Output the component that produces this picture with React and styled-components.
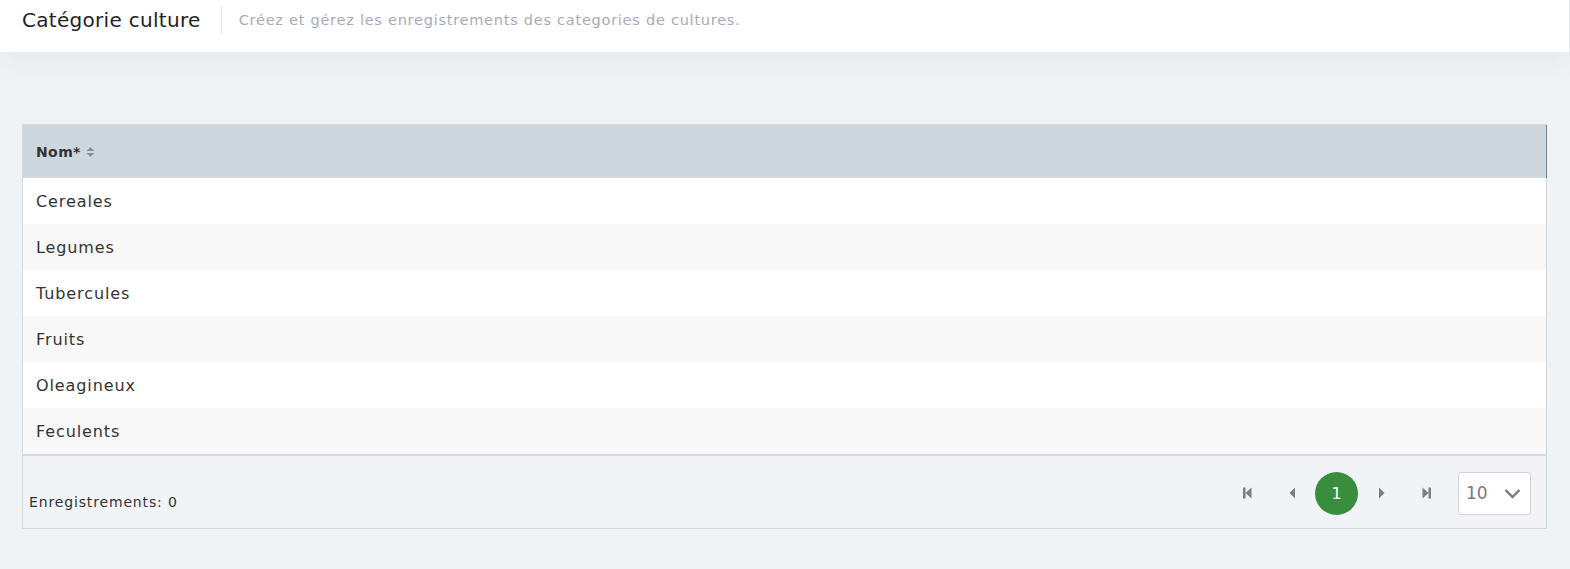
import React from 'react';
import styled, { createGlobalStyle } from 'styled-components';

const GlobalStyle = createGlobalStyle`
  body {
    margin: 0;
    background: #f0f3f5;
    font-family: 'DejaVu Sans', 'Open Sans', sans-serif;
    color: #333;
  }
`;

const rows = ['Cereales', 'Legumes', 'Tubercules', 'Fruits', 'Oleagineux', 'Feculents'];

const TopBar = styled.div`
  height: 52px;
  background: #fff;
  display: flex;
  align-items: flex-start;
  padding: 6px 22px 0;
  box-sizing: border-box;
  box-shadow: 0 10px 28px rgba(40, 50, 70, 0.05);
  border-right: 1px solid #e3e6e9;
  position: relative;
`;

const Title = styled.h1`
  margin: 0;
  font-size: 20px;
  font-weight: 400;
  letter-spacing: 0.3px;
  line-height: 28px;
  color: #1f1f1f;
  padding-right: 20px;
  border-right: 1px solid #e6e8ea;
`;

const Subtitle = styled.span`
  font-size: 14.5px;
  letter-spacing: 0.75px;
  line-height: 28px;
  color: #a9aabb;
  padding-left: 17px;
`;

const Content = styled.div`
  padding: 72px 23px 40px 22px;
`;

const Table = styled.div`
  border: 1px solid #d3d9de;
  border-right-color: #cfd6db;
  background: #fff;
`;

const HeadRow = styled.div`
  height: 53px;
  background: #cfd7de;
  display: flex;
  align-items: center;
  padding-left: 13px;
  font-size: 14px;
  font-weight: 700;
  letter-spacing: 0.4px;
  color: #333;
  border-right: 1px solid #6f7f8b;
  margin-right: -1px;
`;

const SortIcon = styled.svg`
  margin-left: 5px;
`;

const Row = styled.div`
  height: 46px;
  display: flex;
  align-items: center;
  padding-left: 13px;
  font-size: 16px;
  letter-spacing: 0.9px;
  color: #333;
  background: ${(p) => (p.$odd ? '#f8f8f8' : '#fff')};
`;

const Footer = styled.div`
  border-top: 2px solid #d3d9de;
  background: #f1f3f7;
  height: 74px;
  display: flex;
  align-items: center;
  justify-content: space-between;
  padding: 2px 15px 0 6px;
  box-sizing: border-box;
`;

const Count = styled.span`
  font-size: 14px;
  letter-spacing: 0.85px;
  color: #333;
  margin-top: 18px;
`;

const Pager = styled.div`
  display: flex;
  align-items: center;
  gap: 2px;
`;

const PageButton = styled.button`
  width: 43px;
  height: 43px;
  border: none;
  border-radius: 50%;
  background: ${(p) => (p.$active ? '#388e3c' : 'transparent')};
  color: #fff;
  font-family: inherit;
  font-size: 16px;
  display: flex;
  align-items: center;
  justify-content: center;
  padding: 0;
  cursor: pointer;
`;

const Select = styled.div`
  margin-left: 8px;
  width: 73px;
  height: 43px;
  box-sizing: border-box;
  background: #fff;
  border: 1px solid #d4d4d4;
  border-radius: 3px;
  display: flex;
  align-items: center;
  justify-content: space-between;
  padding: 0 9px 0 7px;
  font-size: 17px;
  color: #7b7b7b;
`;

const Arrow = ({ d }) => (
  <svg width="14" height="14" viewBox="0 0 14 14" fill="#7e7e7e">
    <path d={d} />
  </svg>
);

export default function App() {
  return (
    <>
      <GlobalStyle />
      <TopBar>
        <Title>Catégorie culture</Title>
        <Subtitle>Créez et gérez les enregistrements des categories de cultures.</Subtitle>
      </TopBar>
      <Content>
        <Table>
          <HeadRow>
            Nom*
            <SortIcon width="9" height="12" viewBox="0 0 9 12" fill="#8a8f95">
              <path d="M4.5 1L8.5 5H0.5Z M4.5 11L0.5 7H8.5Z" />
            </SortIcon>
          </HeadRow>
          {rows.map((r, i) => (
            <Row key={r} $odd={i % 2 === 1}>
              {r}
            </Row>
          ))}
          <Footer>
            <Count>Enregistrements: 0</Count>
            <Pager>
              <PageButton>
                <Arrow d="M3 1.5h2.5v11H3z M11.5 1.5v11L5.5 7z" />
              </PageButton>
              <PageButton>
                <Arrow d="M10 1.5v11L4.5 7z" />
              </PageButton>
              <PageButton $active>1</PageButton>
              <PageButton>
                <Arrow d="M4 1.5v11L9.5 7z" />
              </PageButton>
              <PageButton>
                <Arrow d="M2.5 1.5v11L8.5 7z M8.5 1.5h2.5v11H8.5z" />
              </PageButton>
              <Select>
                10
                <svg width="17" height="11" viewBox="0 0 17 11" fill="none" stroke="#7b7b7b" strokeWidth="2.4">
                  <path d="M1.5 2L8.5 9L15.5 2" />
                </svg>
              </Select>
            </Pager>
          </Footer>
        </Table>
      </Content>
    </>
  );
}
